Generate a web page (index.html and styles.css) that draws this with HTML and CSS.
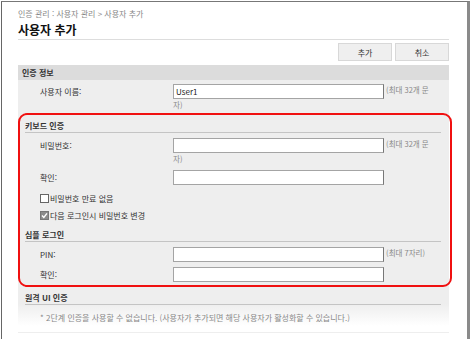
FILE: index.html
```html
<!DOCTYPE html>
<html lang="ko">
<head>
    <meta charset="UTF-8">
    <meta name="viewport" content="width=device-width, initial-scale=1.0">
    <title>사용자 추가</title>
    <link rel="stylesheet" href="styles.css">
</head>
<body>
    <div class="frame">
        <div class="page">
            <div class="crumbs">인증 관리 : 사용자 관리 &gt; 사용자 추가</div>
            <h1 class="title">사용자 추가</h1>

            <div class="toolbar">
                <button class="btn">추가</button>
                <button class="btn">취소</button>
            </div>

            <div class="section-head">인증 정보</div>
            <div class="section-body">
                <div class="group">
                    <div class="row">
                        <label class="row-label">사용자 이름:</label>
                        <div class="row-value"><input class="field" type="text" value="User1"> <span class="hint">(최대 32개 문자)</span></div>
                    </div>
                </div>

                <div class="highlight">
                    <div class="group-head">키보드 인증</div>
                    <div class="row row-first">
                        <label class="row-label">비밀번호:</label>
                        <div class="row-value"><input class="field" type="password"> <span class="hint">(최대 32개 문자)</span></div>
                    </div>
                    <div class="row">
                        <label class="row-label">확인:</label>
                        <div class="row-value"><input class="field" type="password"></div>
                    </div>
                    <div class="check-row check-first">
                        <span class="check"></span>비밀번호 만료 없음
                    </div>
                    <div class="check-row">
                        <span class="check checked">
                            <svg width="7" height="7" viewBox="0 0 7 7"><path d="M1 3.6 L2.8 5.4 L6 1.4" fill="none" stroke="#fff" stroke-width="1.4"/></svg>
                        </span>다음 로그인시 비밀번호 변경
                    </div>

                    <div class="group-head group-next">심플 로그인</div>
                    <div class="row row-first">
                        <label class="row-label">PIN:</label>
                        <div class="row-value"><input class="field" type="password"> <span class="hint">(최대 7자리)</span></div>
                    </div>
                    <div class="row">
                        <label class="row-label">확인:</label>
                        <div class="row-value"><input class="field" type="password"></div>
                    </div>
                </div>

                <div class="group group-remote">
                    <div class="group-head">원격 UI 인증</div>
                    <p class="note">* 2단계 인증을 사용할 수 없습니다. (사용자가 추가되면 해당 사용자가 활성화할 수 있습니다.)</p>
                </div>
            </div>
            <div class="foot-line"></div>
        </div>
    </div>
</body>
</html>
```

FILE: styles.css
```css
body {
    margin: 0;
    background-color: white;
    font-family: "Noto Sans CJK KR", "Noto Sans", sans-serif;
    color: #333;
}

.frame {
    margin: 1px 0 0 1px;
    height: 338px;
    box-sizing: border-box;
    border-top: 1px solid #777;
    border-left: 1px solid #666;
    border-right: 3px solid #8a8a8a;
    overflow: hidden;
}

.page {
    padding: 0 18px 0 16px;
}

.crumbs {
    padding-top: 6px;
    font-size: 8px;
    line-height: 12px;
    color: #888;
}

.title {
    margin: 2px 0 0;
    padding-bottom: 1px;
    font-size: 12px;
    line-height: 16px;
    font-weight: 700;
    color: #111;
    border-bottom: 1px solid #ddd;
}

.toolbar {
    display: flex;
    justify-content: flex-end;
    gap: 3px;
    margin-top: 3px;
}

.btn {
    width: 54px;
    height: 18px;
    padding: 0;
    font-family: inherit;
    font-size: 8px;
    color: #333;
    background-color: #efefef;
    border: 1px solid #d8d8d8;
}

.section-head {
    margin-top: 4px;
    height: 15px;
    padding-left: 4px;
    font-size: 8px;
    line-height: 15px;
    font-weight: 700;
    background-color: #dcdcdc;
}

.section-body {
    padding-bottom: 2px;
    background: linear-gradient(#eeeeee 0, #eeeeee calc(100% - 22px), #ffffff 100%);
}

.group {
    margin: 0 8px 0 7px;
    padding-top: 4px;
}

.highlight {
    position: relative;
    margin: 9px 8px 0 7px;
}

/* red annotation frame drawn over the two sub-sections */
.highlight::after {
    content: "";
    position: absolute;
    top: -7px;
    left: -7px;
    right: -11px;
    bottom: -5px;
    border: 2px solid #f01010;
    border-radius: 9px;
    pointer-events: none;
}

.group-head {
    font-size: 8px;
    line-height: 12px;
    font-weight: 700;
    border-bottom: 1px solid #c4c4c4;
}

.group-next {
    margin-top: 5px;
}

.group-remote {
    margin-top: 10px;
    padding-top: 0;
}

.row {
    display: grid;
    grid-template-columns: 133px 262px;
    padding-left: 15px;
}

.row + .row {
    margin-top: 5px;
}

.row-first {
    margin-top: 5px;
}

.row-label {
    font-size: 8px;
    line-height: 15px;
}

.row-value {
    font-size: 7.5px;
    line-height: 12px;
    color: #888;
    word-break: break-all;
}

.field {
    vertical-align: top;
    width: 211px;
    height: 15px;
    box-sizing: border-box;
    margin: 0;
    padding: 0 2px;
    font-family: inherit;
    font-size: 8px;
    color: #222;
    background-color: white;
    border: 1px solid #a4a4a4;
    border-right-color: #777;
    border-radius: 0;
}

.hint {
    color: #888;
}

.check-row {
    display: flex;
    align-items: center;
    height: 17px;
    padding-left: 15px;
    font-size: 8px;
}

.check-first {
    margin-top: 5px;
}

.check {
    display: flex;
    align-items: center;
    justify-content: center;
    width: 9px;
    height: 9px;
    box-sizing: border-box;
    margin-right: 1px;
    background-color: white;
    border: 1px solid #666;
}

.check.checked {
    background-color: #8c8c8c;
    border-color: #777;
}

.note {
    margin: 7px 0 0;
    padding-left: 15px;
    font-size: 8px;
    line-height: 12px;
    color: #888;
    white-space: nowrap;
}

.foot-line {
    margin-top: 6px;
    height: 1px;
    background-color: #eee;
}
```
